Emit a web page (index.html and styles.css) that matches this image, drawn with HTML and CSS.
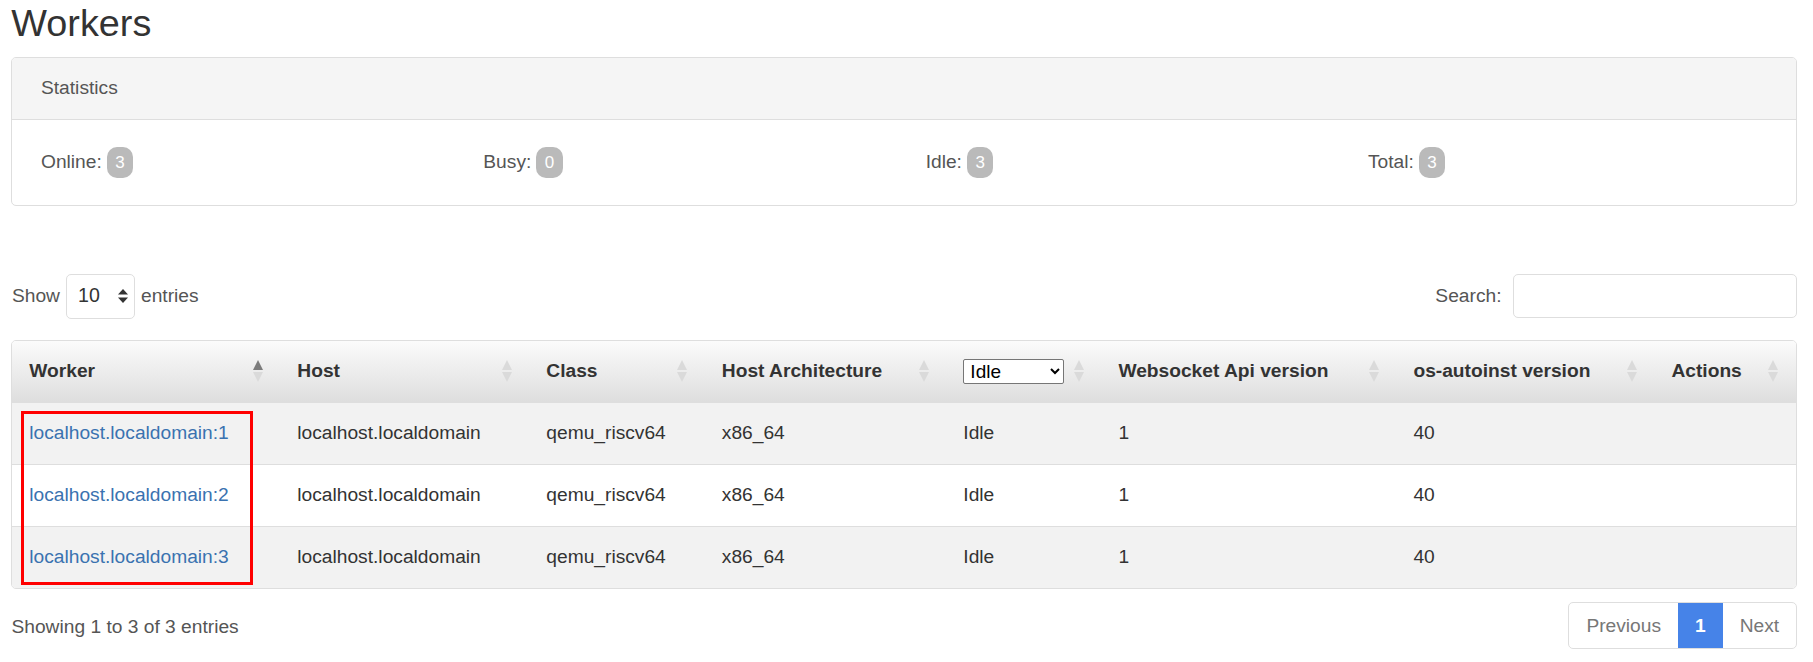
FILE: index.html
```html
<!DOCTYPE html>
<html lang="en">
<head>
<meta charset="utf-8">
<title>Workers</title>
<link rel="stylesheet" href="styles.css">
</head>
<body>
<div class="page">
  <h2 class="title">Workers</h2>

  <div class="card">
    <div class="card-header">Statistics</div>
    <div class="card-body">
      <div class="stat">Online: <span class="badge">3</span></div>
      <div class="stat">Busy: <span class="badge">0</span></div>
      <div class="stat">Idle: <span class="badge">3</span></div>
      <div class="stat">Total: <span class="badge">3</span></div>
    </div>
  </div>

  <div class="controls">
    <div class="length">
      <span>Show</span>
      <span class="len-select">
        <span class="len-value">10</span>
        <svg class="len-arrows" width="10" height="14" viewBox="0 0 10 14"><polygon points="0,5.5 5,0 10,5.5" fill="#333"/><polygon points="0,8.5 10,8.5 5,14" fill="#333"/></svg>
      </span>
      <span>entries</span>
    </div>
    <div class="search">
      <span>Search:</span>
      <input class="search-input" type="text">
    </div>
  </div>

  <div class="table-wrap">
    <table class="workers">
      <colgroup>
        <col style="width:268px"><col style="width:249px"><col style="width:175.5px"><col style="width:241.5px"><col style="width:155px"><col style="width:295px"><col style="width:258px"><col style="width:141px">
      </colgroup>
      <thead>
        <tr>
          <th><div class="th-in"><span>Worker</span><svg class="sort" width="10" height="22" viewBox="0 0 10 22"><polygon points="0,10 5,0 10,10" fill="#7c7c7c"/><polygon points="0,12 10,12 5,22" fill="#dadada"/></svg></div></th>
          <th><div class="th-in"><span>Host</span><svg class="sort" width="10" height="22" viewBox="0 0 10 22"><polygon points="0,10 5,0 10,10" fill="#dadada"/><polygon points="0,12 10,12 5,22" fill="#dadada"/></svg></div></th>
          <th><div class="th-in"><span>Class</span><svg class="sort" width="10" height="22" viewBox="0 0 10 22"><polygon points="0,10 5,0 10,10" fill="#dadada"/><polygon points="0,12 10,12 5,22" fill="#dadada"/></svg></div></th>
          <th><div class="th-in"><span>Host Architecture</span><svg class="sort" width="10" height="22" viewBox="0 0 10 22"><polygon points="0,10 5,0 10,10" fill="#dadada"/><polygon points="0,12 10,12 5,22" fill="#dadada"/></svg></div></th>
          <th><div class="th-in"><select class="status-select"><option>Idle</option><option>Busy</option><option>Offline</option></select><svg class="sort" width="10" height="22" viewBox="0 0 10 22"><polygon points="0,10 5,0 10,10" fill="#dadada"/><polygon points="0,12 10,12 5,22" fill="#dadada"/></svg></div></th>
          <th><div class="th-in"><span>Websocket Api version</span><svg class="sort" width="10" height="22" viewBox="0 0 10 22"><polygon points="0,10 5,0 10,10" fill="#dadada"/><polygon points="0,12 10,12 5,22" fill="#dadada"/></svg></div></th>
          <th><div class="th-in"><span>os-autoinst version</span><svg class="sort" width="10" height="22" viewBox="0 0 10 22"><polygon points="0,10 5,0 10,10" fill="#dadada"/><polygon points="0,12 10,12 5,22" fill="#dadada"/></svg></div></th>
          <th><div class="th-in"><span>Actions</span><svg class="sort" width="10" height="22" viewBox="0 0 10 22"><polygon points="0,10 5,0 10,10" fill="#dadada"/><polygon points="0,12 10,12 5,22" fill="#dadada"/></svg></div></th>
        </tr>
      </thead>
      <tbody>
        <tr class="odd">
          <td><a href="#" class="link">localhost.localdomain:1</a></td>
          <td>localhost.localdomain</td><td>qemu_riscv64</td><td>x86_64</td><td>Idle</td><td>1</td><td>40</td><td></td>
        </tr>
        <tr class="even">
          <td><a href="#" class="link">localhost.localdomain:2</a></td>
          <td>localhost.localdomain</td><td>qemu_riscv64</td><td>x86_64</td><td>Idle</td><td>1</td><td>40</td><td></td>
        </tr>
        <tr class="odd">
          <td><a href="#" class="link">localhost.localdomain:3</a></td>
          <td>localhost.localdomain</td><td>qemu_riscv64</td><td>x86_64</td><td>Idle</td><td>1</td><td>40</td><td></td>
        </tr>
      </tbody>
    </table>
    <div class="highlight"></div>
  </div>

  <div class="footer">
    <div class="info">Showing 1 to 3 of 3 entries</div>
    <div class="pagination">
      <span class="page-item">Previous</span>
      <span class="page-item active">1</span>
      <span class="page-item">Next</span>
    </div>
  </div>
</div>
</body>
</html>
```

FILE: styles.css
```css
* { box-sizing: border-box; }

html, body {
  margin: 0;
  background: #fff;
}

body {
  font-family: "Liberation Sans", Arial, sans-serif;
  font-size: 19.2px;
  line-height: 1.5;
  color: #333;
}

.page {
  padding: 0 16.5px 0 11.3px;
}

.title {
  margin: 0 0 10.7px;
  font-size: 37.8px;
  font-weight: 400;
  line-height: 46px;
  color: #333;
}

.card {
  border: 1px solid #dedede;
  border-radius: 5px;
  overflow: hidden;
}

.card-header {
  height: 62px;
  display: flex;
  align-items: center;
  padding: 0 28.7px;
  background: #f5f5f5;
  border-bottom: 1px solid #dedede;
  color: #555;
}

.card-body {
  height: 85px;
  display: grid;
  grid-template-columns: repeat(4, 1fr);
  column-gap: 43.5px;
  align-items: center;
  padding: 0 28.7px;
}

.stat {
  color: #555;
  display: flex;
  align-items: center;
  gap: 5px;
}

.badge {
  display: inline-block;
  background: #bababa;
  color: #fff;
  font-size: 17px;
  line-height: 1;
  padding: 7px 8.5px;
  border-radius: 10px;
}

.controls {
  margin-top: 68px;
  height: 45px;
  display: flex;
  justify-content: space-between;
  align-items: center;
  color: #555;
}

.length {
  display: flex;
  align-items: center;
  gap: 6px;
  padding-left: 0.7px;
}

.len-select {
  width: 69px;
  height: 45px;
  border: 1px solid #dedede;
  border-radius: 5px;
  display: flex;
  align-items: center;
  justify-content: space-between;
  padding: 0 6px 0 11px;
  color: #333;
}

.len-value {
  font-size: 19.6px;
}

.search {
  display: flex;
  align-items: center;
  gap: 11px;
}

.search-input {
  width: 284px;
  height: 44px;
  border: 1px solid #dedede;
  border-radius: 5px;
  font: inherit;
  padding: 0 10px;
}

.table-wrap {
  position: relative;
  margin-top: 21px;
  border: 1px solid #dedede;
  border-radius: 5px;
  overflow: hidden;
}

.workers {
  width: 100%;
  table-layout: fixed;
  border-collapse: separate;
  border-spacing: 0;
}

.workers th {
  height: 61px;
  padding: 0 17.5px 0 17px;
  text-align: left;
  font-weight: 700;
  color: #333;
  background: linear-gradient(to bottom, #fbfbfb 0%, #dedede 100%);
  vertical-align: middle;
  white-space: nowrap;
}

.th-in {
  display: flex;
  align-items: center;
  justify-content: space-between;
}

.sort {
  flex: none;
  display: block;
}

.status-select {
  width: 101px;
  height: 25px;
  font-family: "Liberation Sans", Arial, sans-serif;
  font-size: 19px;
  color: #000;
  background: #fff;
  border: 1px solid #767676;
  border-radius: 2px;
  padding: 0 2px;
}

.workers tbody tr {
  height: 62px;
}

.workers td {
  padding: 0 17px;
  border-top: 1px solid #dedede;
  vertical-align: middle;
  color: #333;
  white-space: nowrap;
}

.workers tr.odd td {
  background: #f2f2f2;
}

.workers tr.even td {
  background: #fff;
}

.link {
  color: #3a72b0;
  text-decoration: none;
}

.highlight {
  position: absolute;
  left: 8.4px;
  top: 70.7px;
  width: 232.6px;
  height: 174px;
  border: 3px solid #f00;
  pointer-events: none;
}

.footer {
  margin-top: 13px;
  display: flex;
  justify-content: space-between;
  align-items: center;
}

.info {
  color: #555;
  padding-left: 0.2px;
  padding-top: 4px;
}

.pagination {
  display: flex;
  border: 1px solid #dedede;
  border-radius: 5px;
  overflow: hidden;
  margin-right: -0.7px;
}

.page-item {
  padding: 0 17px;
  line-height: 45px;
  color: #777;
}

.page-item.active {
  background: #4683e8;
  color: #fff;
  font-weight: 700;
}
```
